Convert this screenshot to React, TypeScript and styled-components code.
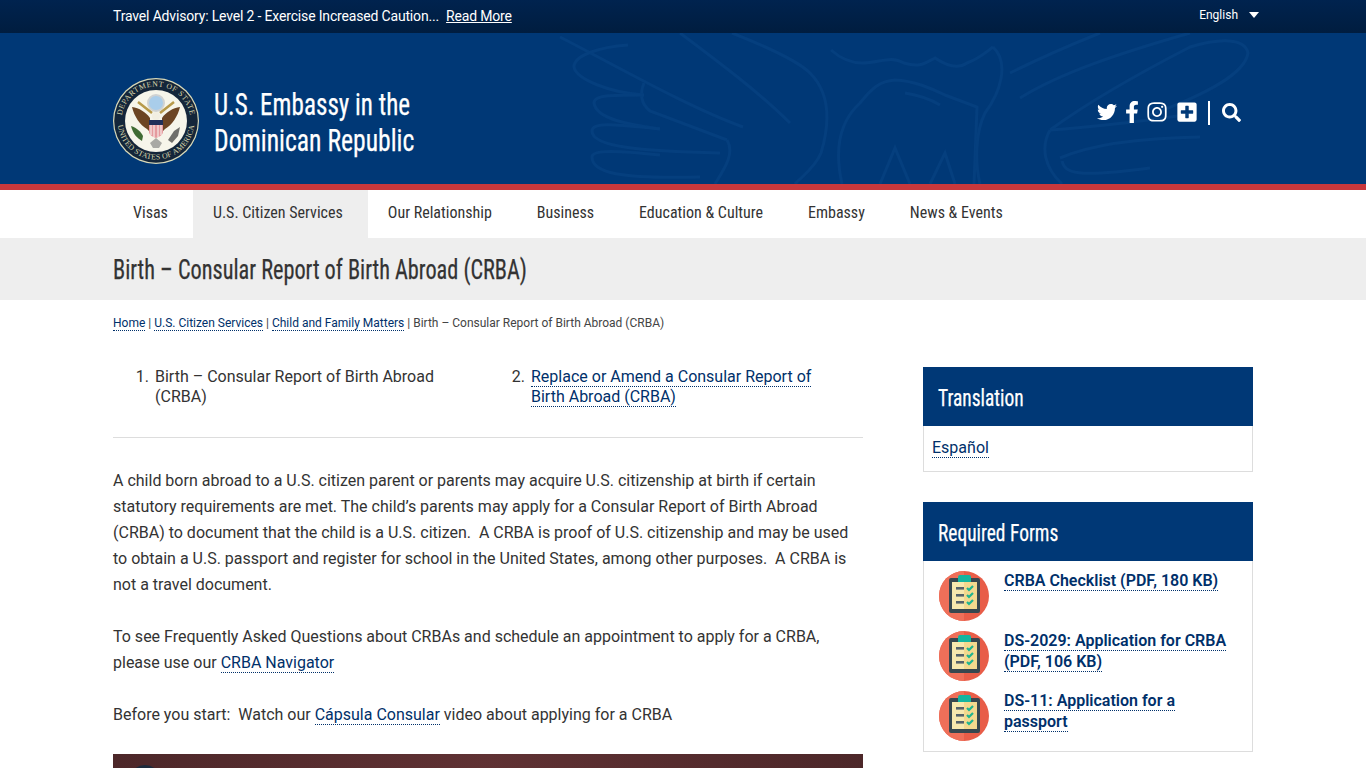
import React from 'react';
import styled, { createGlobalStyle } from 'styled-components';
import { FaTwitter, FaFacebookF, FaInstagram, FaPlusSquare, FaSearch } from 'react-icons/fa';

const NAVY = '#003876';
const LINK = '#00306a';
const TITLE_FONT = '"Liberation Sans Narrow", "Roboto Condensed", Roboto, sans-serif';

const GlobalStyle = createGlobalStyle`
  html, body {
    margin: 0;
    height: 100%;
    overflow: hidden;
    background: #fff;
  }
  body {
    font-family: Roboto, "Liberation Sans", sans-serif;
    color: #333;
  }
  #root {
    height: 768px;
    overflow: hidden;
  }
`;

const Container = styled.div`
  width: 1140px;
  margin: 0 auto;
`;

const TopBar = styled.div`
  height: 33px;
  background: linear-gradient(#00234f, #001d3f);
`;

const TopBarInner = styled(Container)`
  display: flex;
  justify-content: space-between;
  height: 33px;
  color: #fff;
`;

const Advisory = styled.div`
  font-size: 14px;
  line-height: 32px;
  letter-spacing: -0.17px;
`;

const ReadMore = styled.a`
  margin-left: 7px;
  color: #fff;
  text-decoration: underline;
`;

const Lang = styled.div`
  display: flex;
  align-items: center;
  gap: 11px;
  height: 29px;
  font-size: 12px;
  margin-right: -6px;
`;

const Caret = styled.span`
  width: 0;
  height: 0;
  border-left: 5px solid transparent;
  border-right: 5px solid transparent;
  border-top: 6px solid #fff;
`;

const Header = styled.header`
  position: relative;
  height: 151px;
  background: ${NAVY};
  border-bottom: 6px solid #c8383c;
  overflow: hidden;
`;

const Watermark = styled.svg`
  position: absolute;
  left: 0;
  top: 0;
`;

const HeaderInner = styled(Container)`
  position: relative;
  display: flex;
  align-items: flex-start;
  justify-content: space-between;
  height: 151px;
`;

const Brand = styled.div`
  display: flex;
  align-items: center;
  gap: 15px;
  margin-top: 45px;
`;

// Oswald is not installed: a narrow face, squeezed to the same run length
const Squeezed = styled.span<{ $x: number }>`
  display: inline-block;
  white-space: nowrap;
  transform: scaleX(${(p) => p.$x});
  transform-origin: left center;
  -webkit-text-stroke: 0.25px currentColor;
`;

const SiteName = styled.div`
  font-family: ${TITLE_FONT};
  font-size: 31px;
  line-height: 36px;
  padding-top: 4px;
  color: #fff;
`;

const Social = styled.div`
  display: flex;
  align-items: center;
  margin-top: 68px;
  margin-right: 12px;
  color: #fff;
`;

const SocialIcon = styled.span<{ $w: number; $gap: number }>`
  display: flex;
  justify-content: center;
  width: ${(p) => p.$w}px;
  margin-top: -2px;
  margin-right: ${(p) => p.$gap}px;
  font-size: 22px;

  svg {
    flex: none;
  }
`;

const Divider = styled.span`
  width: 2px;
  height: 24px;
  margin-right: 12px;
  background: #fff;
`;

const Nav = styled.nav`
  height: 48px;
  background: #fff;
`;

const NavList = styled(Container)`
  display: flex;
`;

const NavItem = styled.a<{ $active?: boolean }>`
  padding: 0 25px 0 20px;
  font-family: ${TITLE_FONT};
  font-size: 16px;
  line-height: 46px;
  height: 48px;
  color: #333;
  background: ${(p) => (p.$active ? '#eee' : 'transparent')};
`;

const TitleBand = styled.div`
  height: 62px;
  background: #eee;
`;

const PageTitle = styled.h1`
  margin: 0;
  font-family: ${TITLE_FONT};
  font-size: 27px;
  font-weight: 400;
  line-height: 65px;
  height: 62px;
  color: #333;
`;

const Breadcrumb = styled.div`
  padding-top: 15px;
  font-size: 12px;
  line-height: 16px;
  color: #444;
`;

const Link = styled.a`
  color: ${LINK};
  border-bottom: 1px dotted ${LINK};
`;

const Columns = styled(Container)`
  display: grid;
  grid-template-columns: 750px 330px;
  column-gap: 60px;
  margin-top: 36px;
`;

const SubNav = styled.ol`
  display: grid;
  grid-template-columns: 376px 374px;
  margin: 0;
  padding: 0 0 30px;
  border-bottom: 1px solid #ddd;
  list-style: none;
  counter-reset: step;
  font-size: 16px;
  line-height: 20px;
`;

const SubNavItem = styled.li`
  position: relative;
  width: 310px;
  margin: 0 0 0 42px;
  counter-increment: step;

  &::before {
    content: counter(step) '.';
    position: absolute;
    right: 100%;
    margin-right: 6px;
  }
`;

const Paragraph = styled.p`
  margin: 0 0 26px;
  font-size: 16px;
  line-height: 26px;
`;

const Body = styled.div`
  padding-top: 30px;
`;

const Video = styled.div`
  position: relative;
  height: 422px;
  margin-top: 26px;
  background: radial-gradient(ellipse at 50% 0, #5f3133, #452325);
`;

const VideoAvatar = styled.span`
  position: absolute;
  left: 16px;
  top: 11px;
  width: 32px;
  height: 32px;
  border-radius: 50%;
  background: #1d2a3c;
`;

const Sidebar = styled.aside`
  display: flex;
  flex-direction: column;
  gap: 30px;
`;

const WidgetTitle = styled.h3`
  margin: 0;
  height: 59px;
  padding-left: 15px;
  background: ${NAVY};
  color: #fff;
  font-family: ${TITLE_FONT};
  font-size: 24px;
  font-weight: 400;
  line-height: 62px;
`;

const WidgetBody = styled.div`
  border: 1px solid #ddd;
  border-top: 0;
`;

const TranslationLink = styled.div`
  height: 45px;
  padding-left: 8px;
  font-size: 16px;
  line-height: 43px;
`;

const FormList = styled.div`
  display: flex;
  flex-direction: column;
  gap: 10px;
  padding: 10px 0 10px 15px;
`;

const FormRow = styled.div`
  display: flex;
  gap: 15px;
  height: 50px;
`;

const FormLink = styled.div`
  width: 232px;
  font-size: 16px;
  font-weight: 600;
  line-height: 21px;
  margin-top: -1px;
`;

const Seal = () => (
  <svg width="86" height="86" viewBox="0 0 86 86" aria-hidden="true">
    <defs>
      <path id="sealTop" d="M8.5 43 A34.5 34.5 0 0 1 77.5 43" />
      <path id="sealBottom" d="M4.5 43 A38.5 38.5 0 0 0 81.5 43" />
    </defs>
    <circle cx="43" cy="43" r="43" fill="#d9d9b8" />
    <circle cx="43" cy="43" r="41.8" fill="#14263a" />
    <circle cx="43" cy="43" r="31" fill="#f6f5ea" />
    <text fontFamily="Liberation Serif, serif" fontSize="7.8" fill="#d8d5ac" letterSpacing="0.5">
      <textPath href="#sealTop" startOffset="50%" textAnchor="middle">DEPARTMENT OF STATE</textPath>
    </text>
    <text fontFamily="Liberation Serif, serif" fontSize="7.8" fill="#d8d5ac" letterSpacing="0.2">
      <textPath href="#sealBottom" startOffset="50%" textAnchor="middle">UNITED STATES OF AMERICA</textPath>
    </text>
    <circle cx="43" cy="25" r="8" fill="#a9cdea" stroke="#cfd2d2" strokeWidth="2" />
    <path d="M25 24 L39 35 M61 24 L47 35" stroke="#b79a4a" strokeWidth="2.5" />
    <path d="M19 29 C26 30 33 34 37 40 L37 54 L34 51 C27 47 21 38 19 29 Z" fill="#6c4523" />
    <path d="M67 29 C60 30 53 34 49 40 L49 54 L52 51 C59 47 65 38 67 29 Z" fill="#6c4523" />
    <circle cx="43" cy="38" r="4" fill="#f2efe2" />
    <path d="M36 42 H50 V47 H36 Z" fill="#20305a" />
    <path d="M36 47 H50 V54 C50 57 46 59 43 60 C40 59 36 57 36 54 Z" fill="#e59a9e" />
    <path d="M38 47 V57 M41 47 V59 M45 47 V59 M48 47 V57" stroke="#f6e9e6" strokeWidth="1.2" />
    <path d="M37 65 L43 60 L49 65 L46 70 L40 70 Z" fill="#a9a9a4" />
    <path d="M29 63 C24 60 20 56 18 48 C24 50 28 54 30 58 Z" fill="#3f6b33" />
    <path d="M55 62 L61 53 L67 49 L65 58 L59 65 Z" fill="#6f6f6b" />
  </svg>
);

const ChecklistIcon = () => (
  <svg width="50" height="50" viewBox="0 0 50 50" aria-hidden="true">
    <circle cx="25" cy="25" r="25" fill="#e85d48" />
    <path d="M25 0 A25 25 0 0 0 25 50 Z" fill="#ef6f59" />
    <rect x="10" y="7" width="31" height="35" rx="2" fill="#37474f" />
    <rect x="13" y="11" width="25" height="27" fill="#f7e8ae" />
    <rect x="25" y="11" width="13" height="27" fill="#f3d98e" />
    <path d="M19 6 A2 2 0 0 1 21 4 H30 A2 2 0 0 1 32 6 V11 H19 Z" fill="#13b5a0" />
    <rect x="17" y="16" width="8" height="2.6" fill="#55626a" />
    <rect x="17" y="23" width="8" height="2.6" fill="#55626a" />
    <rect x="17" y="30" width="8" height="2.6" fill="#55626a" />
    <path d="M28 17 L30 19 L34 15 M28 24 L30 26 L34 22 M28 31 L30 33 L34 29" fill="none" stroke="#1fb58f" strokeWidth="2.2" />
  </svg>
);

const feathers = [
  'M560 4 C620 35 690 75 743 94',
  'M628 12 C600 14 574 22 574 34 C576 46 610 60 644 62',
  'M644 50 C640 60 640 70 650 78 L727 107',
  'M644 62 C610 62 594 62 594 70 C596 86 630 92 660 96',
  'M660 96 C620 92 592 88 592 98 C592 114 640 118 720 120',
  'M660 122 C620 118 592 116 592 124 C592 140 620 146 700 144',
  'M727 107 C735 120 725 135 715 151',
  'M680 0 C720 30 760 60 790 90',
  'M732 0 C770 15 800 30 810 40 C830 60 830 90 821 120 C815 135 800 145 795 151',
  'M831 17 C840 25 850 30 862 30 C880 30 890 22 904 30 C920 35 925 30 935 25 C950 35 960 35 967 30 C980 25 985 20 993 14',
  'M842 151 C835 120 838 90 860 70 C872 55 880 48 895 47 C915 48 930 55 945 62 L977 74 L974 151',
  'M905 60 C918 62 930 66 940 72',
  'M930 151 L945 120 L955 151 M880 151 L895 115 L910 151',
  'M993 14 C1010 30 1000 60 985 80 C975 100 975 130 980 151',
  'M1010 40 C1040 25 1070 12 1100 0',
  'M1020 65 C1060 40 1120 20 1190 0',
  'M1050 97 C1080 75 1130 45 1190 14 C1220 5 1245 5 1248 20 C1245 40 1210 60 1150 82',
  'M1050 97 C1080 95 1150 88 1196 80',
  'M1060 125 C1090 112 1140 105 1200 104',
  'M1050 97 C1040 115 1045 135 1062 151',
  'M1062 128 C1065 140 1075 145 1150 135',
];

const App: React.FC = () => (
  <>
    <GlobalStyle />
    <TopBar>
      <TopBarInner>
        <Advisory>
          Travel Advisory: Level 2 - Exercise Increased Caution...
          <ReadMore>Read More</ReadMore>
        </Advisory>
        <Lang>
          English
          <Caret />
        </Lang>
      </TopBarInner>
    </TopBar>
    <Header>
      <Watermark width="1366" height="151" viewBox="0 0 1366 151" aria-hidden="true">
        {feathers.map((d) => (
          <path key={d} d={d} fill="none" stroke="#053f7e" strokeWidth="3" />
        ))}
      </Watermark>
      <HeaderInner>
        <Brand>
          <Seal />
          <SiteName>
            <Squeezed $x={0.81}>U.S. Embassy in the</Squeezed>
            <br />
            <Squeezed $x={0.827}>Dominican Republic</Squeezed>
          </SiteName>
        </Brand>
        <Social>
          <SocialIcon $w={20} $gap={9}><FaTwitter size={20} /></SocialIcon>
          <SocialIcon $w={12} $gap={9}><FaFacebookF /></SocialIcon>
          <SocialIcon $w={20} $gap={10}><FaInstagram /></SocialIcon>
          <SocialIcon $w={20} $gap={11}><FaPlusSquare /></SocialIcon>
          <Divider />
          <SocialIcon $w={19} $gap={0}><FaSearch size={19} /></SocialIcon>
        </Social>
      </HeaderInner>
    </Header>
    <Nav>
      <NavList>
        <NavItem>Visas</NavItem>
        <NavItem $active>U.S. Citizen Services</NavItem>
        <NavItem>Our Relationship</NavItem>
        <NavItem>Business</NavItem>
        <NavItem>Education &amp; Culture</NavItem>
        <NavItem>Embassy</NavItem>
        <NavItem>News &amp; Events</NavItem>
      </NavList>
    </Nav>
    <TitleBand>
      <Container>
        <PageTitle>
          <Squeezed $x={0.825}>Birth – Consular Report of Birth Abroad (CRBA)</Squeezed>
        </PageTitle>
      </Container>
    </TitleBand>
    <Container>
      <Breadcrumb>
        <Link>Home</Link> | <Link>U.S. Citizen Services</Link> | <Link>Child and Family Matters</Link> | Birth – Consular Report of Birth Abroad (CRBA)
      </Breadcrumb>
    </Container>
    <Columns>
      <main>
        <SubNav>
          <SubNavItem>Birth – Consular Report of Birth Abroad (CRBA)</SubNavItem>
          <SubNavItem><Link>Replace or Amend a Consular Report of Birth Abroad (CRBA)</Link></SubNavItem>
        </SubNav>
        <Body>
          <Paragraph>
            A child born abroad to a U.S. citizen parent or parents may acquire U.S. citizenship at birth if certain statutory requirements are met. The child’s parents may apply for a Consular Report of Birth Abroad (CRBA) to document that the child is a U.S. citizen.&nbsp; A CRBA is proof of U.S. citizenship and may be used to obtain a U.S. passport and register for school in the United States, among other purposes.&nbsp; A CRBA is not a travel document.
          </Paragraph>
          <Paragraph>
            To see Frequently Asked Questions about CRBAs and schedule an appointment to apply for a CRBA, please use our <Link>CRBA Navigator</Link>
          </Paragraph>
          <Paragraph>
            Before you start:&nbsp; Watch our <Link>Cápsula Consular</Link> video about applying for a CRBA
          </Paragraph>
          <Video>
            <VideoAvatar />
          </Video>
        </Body>
      </main>
      <Sidebar>
        <section>
          <WidgetTitle><Squeezed $x={0.81}>Translation</Squeezed></WidgetTitle>
          <WidgetBody>
            <TranslationLink><Link>Español</Link></TranslationLink>
          </WidgetBody>
        </section>
        <section>
          <WidgetTitle><Squeezed $x={0.81}>Required Forms</Squeezed></WidgetTitle>
          <WidgetBody>
            <FormList>
              <FormRow>
                <ChecklistIcon />
                <FormLink><Link>CRBA Checklist (PDF, 180 KB)</Link></FormLink>
              </FormRow>
              <FormRow>
                <ChecklistIcon />
                <FormLink><Link>DS-2029: Application for CRBA (PDF, 106 KB)</Link></FormLink>
              </FormRow>
              <FormRow>
                <ChecklistIcon />
                <FormLink><Link>DS-11: Application for a passport</Link></FormLink>
              </FormRow>
            </FormList>
          </WidgetBody>
        </section>
      </Sidebar>
    </Columns>
  </>
);

export default App;
